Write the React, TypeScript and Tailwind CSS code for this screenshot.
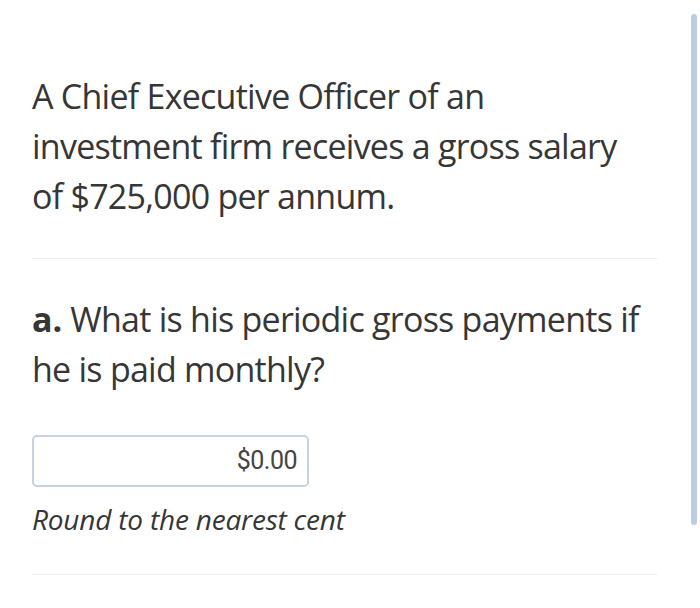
import React from "react";

const App: React.FC = () => {
    return (
        <div className="relative w-[700px] h-[608px] bg-white overflow-hidden font-['Open_Sans',sans-serif] text-[#363636]">
            {/* scrollbar thumb */}
            <div className="absolute right-[3px] top-[14px] w-[6px] h-[511px] rounded-full bg-[#bacde4]" />

            <div className="pl-[32px] pr-[43px] pt-[71px]">
                <p className="max-w-[620px] text-[34px] leading-[50px] tracking-[-0.75px]">
                    A Chief Executive Officer of an investment firm receives a gross salary of $725,000 per annum.
                </p>
                <div className="mt-[37px] h-px bg-[#eeeeee]" />

                <p className="mt-[35px] max-w-[620px] text-[34px] leading-[50px] tracking-[-0.75px]">
                    <span className="font-bold tracking-normal">a.</span> What is his periodic gross payments if he is paid monthly?
                </p>

                <div className="mt-[41px] w-[277px] h-[52px] border-2 border-[#c6d1e1] rounded-[5px] flex items-center justify-end pr-[10px]">
                    <span className="font-['Roboto',sans-serif] text-[25px] tracking-[-0.5px] text-[#444]">$0.00</span>
                </div>

                <p className="mt-[14px] italic text-[28px] leading-[36px] tracking-[-0.2px]">
                    Round to the nearest cent
                </p>
                <div className="mt-[37px] h-px bg-[#eeeeee]" />
            </div>
        </div>
    );
};

export default App;
